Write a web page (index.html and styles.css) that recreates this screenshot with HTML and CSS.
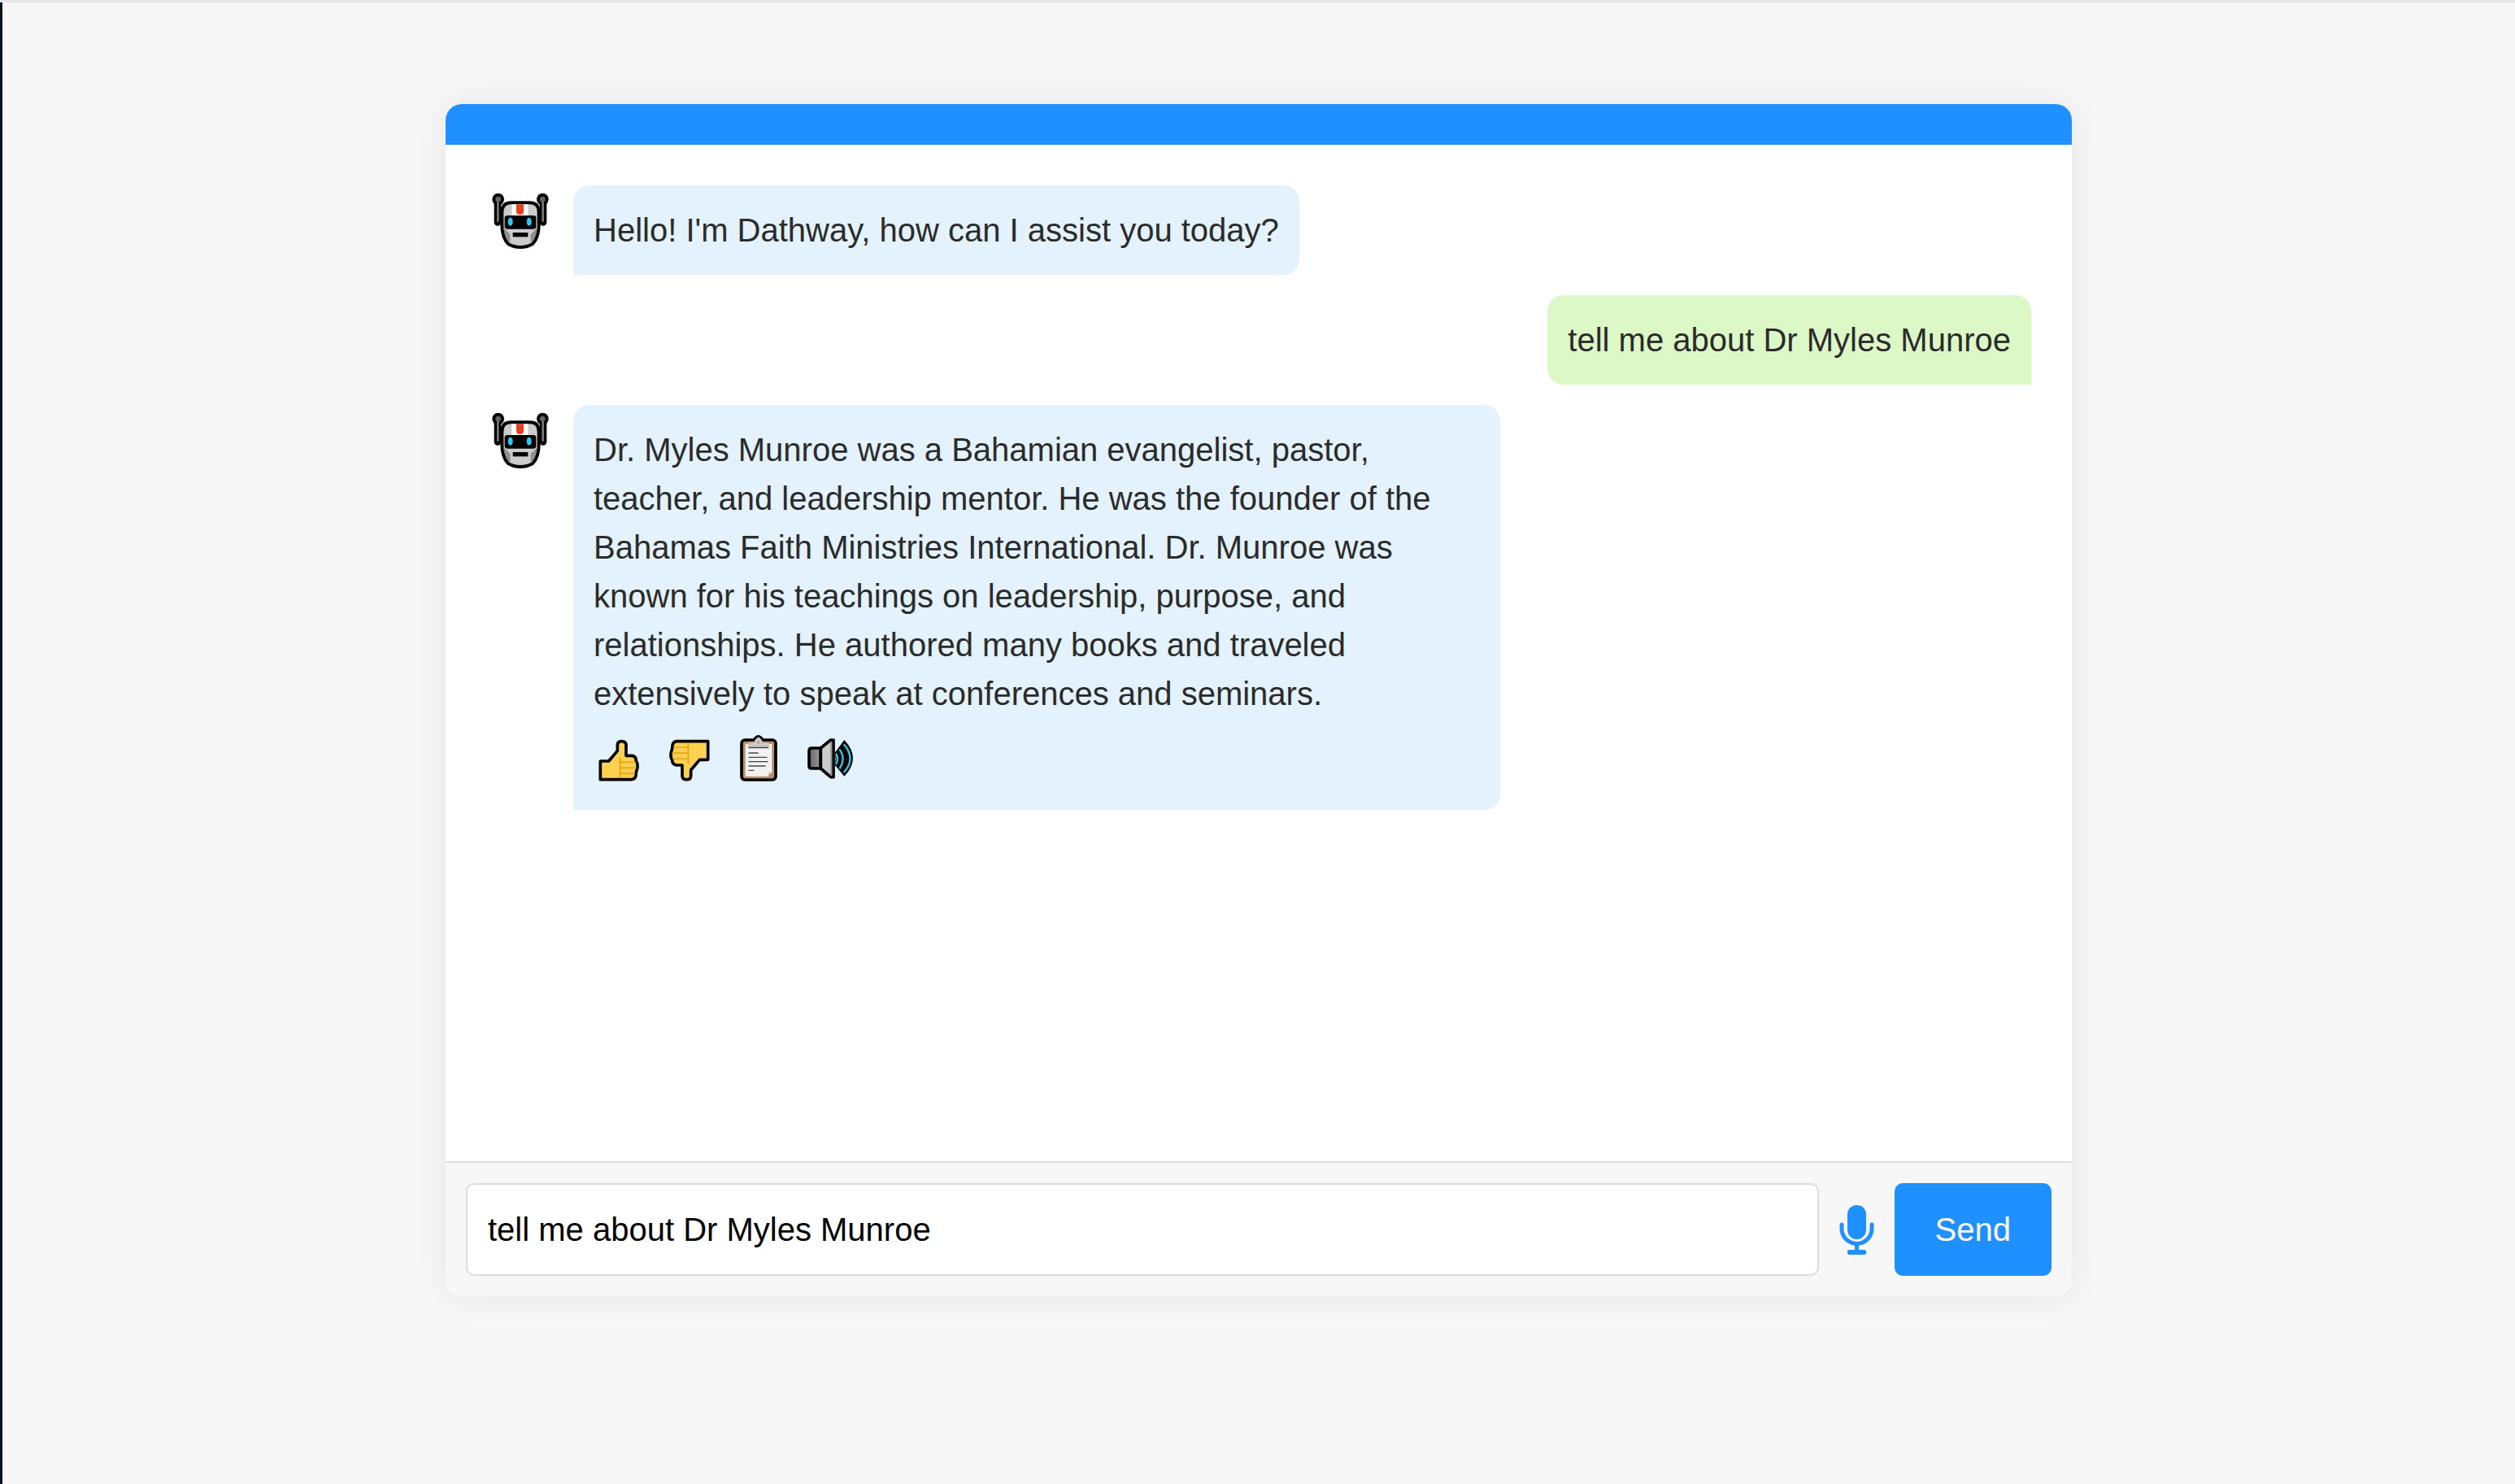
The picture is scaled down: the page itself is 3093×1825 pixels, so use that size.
FILE: index.html
```html
<!DOCTYPE html>
<html lang="en">
<head>
  <meta charset="UTF-8" />
  <meta name="viewport" content="width=device-width, initial-scale=1.0"/>
  <title>Dathway Chat</title>
  <link rel="stylesheet" href="styles.css">
</head>
<body>

  <svg class="defs" width="0" height="0" aria-hidden="true">
    <defs>
      <symbol id="robot" viewBox="24 24 240 240">
        <path d="M66 75V160M234 75V160" stroke="#000" stroke-width="26" stroke-linecap="round" fill="none"/>
        <circle cx="68" cy="75" r="22" fill="#000"/>
        <circle cx="232" cy="75" r="22" fill="#000"/>
        <path d="M67 78V158M233 78V158" stroke="#777" stroke-width="8" fill="none"/>
        <circle cx="68" cy="75" r="10" fill="#666"/>
        <circle cx="232" cy="75" r="10" fill="#666"/>
        <path d="M82 122Q82 88 116 88H184Q218 88 218 122V170Q218 215 195 240Q175 252 150 252Q125 252 105 240Q82 215 82 170Z" fill="#ccc" stroke="#000" stroke-width="12"/>
        <path d="M88 180L112 205V240Q92 220 88 180ZM212 180L188 205V240Q208 220 212 180Z" fill="#8e8e8e"/>
        <rect x="118" y="94" width="60" height="42" fill="#fff"/>
        <path d="M135 94H162V120Q162 132 148 132Q135 132 135 120Z" fill="#ea3f1c"/>
        <rect x="92" y="135" width="116" height="50" rx="10" fill="#000"/>
        <ellipse cx="113" cy="158" rx="9" ry="15" fill="#2fc6f0"/>
        <ellipse cx="182" cy="158" rx="9" ry="15" fill="#2fc6f0"/>
        <rect x="122" y="198" width="56" height="16" fill="#000"/>
      </symbol>
      <g id="thumb">
        <path d="M55 206V138H86L118 100V80Q118 65 133 65Q150 65 150 80V118H172Q187 120 187 138Q193 145 192 160Q190 172 187 178Q188 205 170 206Z" fill="#fcd050" stroke="#000" stroke-width="11" stroke-linejoin="round"/>
        <path d="M128 124V200M128 142H186M128 163H188M128 184H182" stroke="#e7a413" stroke-width="5" fill="none"/>
      </g>
    </defs>
  </svg>

  <div class="page">
    <div class="chat-box">
      <div class="chat-header"></div>

      <div class="chat-messages">
        <div class="message bot">
          <svg class="avatar"><use href="#robot"/></svg>
          <div class="bubble">Hello! I'm Dathway, how can I assist you today?</div>
        </div>

        <div class="message user">
          <div class="bubble">tell me about Dr Myles Munroe</div>
        </div>

        <div class="message bot">
          <svg class="avatar"><use href="#robot"/></svg>
          <div class="bubble">
            Dr. Myles Munroe was a Bahamian evangelist, pastor, teacher, and leadership mentor. He was the founder of the Bahamas Faith Ministries International. Dr. Munroe was known for his teachings on leadership, purpose, and relationships. He authored many books and traveled extensively to speak at conferences and seminars.
            <div class="actions">
              <svg class="action" viewBox="30 36 186 186"><use href="#thumb"/></svg>
              <svg class="action" viewBox="291 36 186 186"><use href="#thumb" transform="rotate(180 253.5 135.5)"/></svg>
              <svg class="action" viewBox="552 36 186 186">
                <rect x="576" y="60" width="126" height="147" rx="12" fill="#b8916a" stroke="#000" stroke-width="11"/>
                <path d="M590 75H688V178L672 194H590Z" fill="#f2f2f2"/>
                <path d="M672 194V178H688Z" fill="#d6d6d6"/>
                <path d="M600 92V76Q600 70 608 70H622Q626 52 638 52Q650 52 654 70H670Q678 70 678 76V92Z" fill="#c9c9c9"/>
                <path d="M622 58Q630 46 638 46Q646 46 654 58" fill="none" stroke="#000" stroke-width="8"/>
                <circle cx="638" cy="69" r="4" fill="#b8916a"/>
                <path d="M602 88H675M602 108H638M602 124H670M602 140H674M602 156H665M602 172H622" stroke="#444" stroke-width="4" fill="none"/>
              </svg>
              <svg class="action" viewBox="813 36 186 186">
                <defs>
                  <linearGradient id="cone" x1="0" x2="1" y1="0" y2="0">
                    <stop offset="0" stop-color="#666"/>
                    <stop offset="1" stop-color="#9a9a9a"/>
                  </linearGradient>
                </defs>
                <path d="M868 90H834Q825 90 825 100V155Q825 165 834 165H868Z" fill="url(#cone)" stroke="#000" stroke-width="11" stroke-linejoin="round"/>
                <path d="M868 90L905 60H915V197H905L868 165Z" fill="#ccc" stroke="#000" stroke-width="11" stroke-linejoin="round"/>
                <path d="M904 66H910V192H904Z" fill="#949494"/>
                <path d="M918 110L955 60Q1019 128 955 194L918 150Q928 130 918 110Z" fill="#000"/>
                <path d="M924 110Q936 130 924 150M937 94Q962 128 937 166M953 76Q1000 128 953 180" fill="none" stroke="#2fc6f0" stroke-width="7"/>
              </svg>
            </div>
          </div>
        </div>
      </div>

      <div class="chat-input">
        <input type="text" value="tell me about Dr Myles Munroe">
        <svg class="mic" viewBox="0 0 43 61">
          <rect x="10" y="0" width="23" height="42" rx="11.5" fill="#1e90ff"/>
          <path d="M3 24V29A18.5 18.5 0 0 0 40 29V24" fill="none" stroke="#1e90ff" stroke-width="5" stroke-linecap="round"/>
          <rect x="19" y="48" width="5" height="9" fill="#1e90ff"/>
          <rect x="10" y="55" width="23" height="6" rx="2" fill="#1e90ff"/>
        </svg>
        <button type="button">Send</button>
      </div>
    </div>
  </div>

</body>
</html>
```

FILE: styles.css
```css
body {
  font-family: "Liberation Sans", Arial, sans-serif;
  background-color: #f7f7f7;
  margin: 0;
  padding: 0;
  border-top: 3px solid #e2e5e1;
}

.defs {
  position: absolute;
}

.page {
  min-height: 1822px;
  box-sizing: border-box;
  border-left: 3px solid #0b1420;
  padding-top: 125px;
}

.chat-box {
  width: 2000px;
  margin: 0 auto;
  background: white;
  border-radius: 20px;
  overflow: hidden;
  box-shadow: 0px 0px 40px rgba(0, 0, 0, 0.08);
}

.chat-header {
  height: 50px;
  background-color: #1e90ff;
}

.chat-messages {
  height: 1250px;
  box-sizing: border-box;
  padding: 50px;
  display: flex;
  flex-direction: column;
  gap: 25px;
}

.message {
  display: flex;
  align-items: flex-start;
  gap: 27px;
}

.message.user {
  justify-content: flex-end;
}

.avatar {
  width: 80px;
  height: 80px;
  flex-shrink: 0;
}

.bubble {
  max-width: 1140px;
  box-sizing: border-box;
  padding: 25px;
  font-size: 40px;
  line-height: 60px;
  color: #2b2b2b;
  background-color: #e3f2fd;
  border-radius: 20px;
  border-bottom-left-radius: 0;
}

.message.user .bubble {
  background-color: #dcf8c6;
  border-bottom-left-radius: 20px;
  border-bottom-right-radius: 0;
}

.actions {
  display: flex;
  gap: 25px;
  padding: 19px 0 7px;
}

.action {
  width: 62px;
  height: 62px;
}

.chat-input {
  display: flex;
  align-items: center;
  padding: 25px;
  background-color: #f7f7f7;
  border-top: 2px solid #dfdfdf;
}

.chat-input input {
  flex: 1;
  min-width: 0;
  height: 114px;
  box-sizing: border-box;
  padding: 0 25px;
  font-family: inherit;
  font-size: 40px;
  color: black;
  background: white;
  border: 2px solid #dddddd;
  border-radius: 10px;
}

.mic {
  width: 43px;
  height: 61px;
  margin: 0 25px;
}

button {
  height: 114px;
  padding: 0 50px;
  font-family: inherit;
  font-size: 40px;
  color: white;
  background-color: #1e90ff;
  border: none;
  border-radius: 10px;
}
```
